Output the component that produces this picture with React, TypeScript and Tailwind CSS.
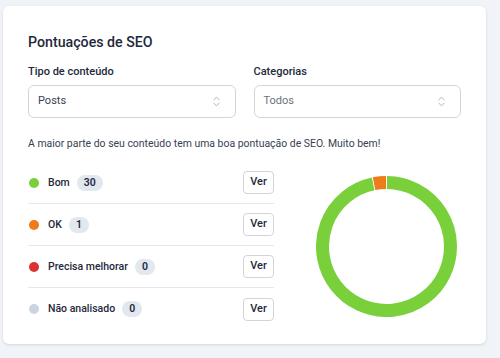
import React from "react";
import { ChevronsUpDown } from "lucide-react";

const rows = [
  { label: "Bom", count: 30, color: "bg-[#7ad03a]" },
  { label: "OK", count: 1, color: "bg-[#ee7c1b]" },
  { label: "Precisa melhorar", count: 0, color: "bg-[#dc3232]" },
  { label: "Não analisado", count: 0, color: "bg-[#cbd5e1]" },
];

function arcPath(cx: number, cy: number, r: number, a0: number, a1: number) {
  const rad = (a: number) => ((a - 90) * Math.PI) / 180;
  const x0 = cx + r * Math.cos(rad(a0));
  const y0 = cy + r * Math.sin(rad(a0));
  const x1 = cx + r * Math.cos(rad(a1));
  const y1 = cy + r * Math.sin(rad(a1));
  const large = a1 - a0 > 180 ? 1 : 0;
  return `M ${x0} ${y0} A ${r} ${r} 0 ${large} 1 ${x1} ${y1}`;
}

function Donut() {
  const cx = 70.5;
  const cy = 70.5;
  const r = 64;
  const split = (30 / 31) * 360;
  return (
    <svg width="141" height="141" viewBox="0 0 141 141">
      <path d={arcPath(cx, cy, r, 0.4, split - 0.4)} stroke="#7ad03a" strokeWidth="13" fill="none" />
      <path d={arcPath(cx, cy, r, split + 0.4, 359.6)} stroke="#ee7c1b" strokeWidth="13" fill="none" />
    </svg>
  );
}

function Select({ value, muted }: { value: string; muted?: boolean }) {
  return (
    <div className="flex h-[33px] items-center justify-between rounded-[6px] border border-[#d1d5db] bg-white pl-[9px] pr-[12px]">
      <span className={"text-[11px] " + (muted ? "text-[#6b7280]" : "text-[#374151]")}>{value}</span>
      <ChevronsUpDown size={13} strokeWidth={1.5} className="text-[#9ca3af]" />
    </div>
  );
}

export default function App() {
  return (
    <div className="min-h-[358px] w-[500px] bg-[#f0f3f8] pl-[3px] pt-[6px] font-['Roboto',sans-serif] text-[#1e293b]">
      <div className="h-[338px] w-[483px] rounded-[6px] bg-white px-[25px] pt-[26px] shadow-[0_1px_3px_rgba(0,0,0,0.12)]">
        <h2 className="text-[14.2px] font-medium leading-[20px] text-[#1e293b]">Pontuações de SEO</h2>
        <div className="mt-[11px] grid grid-cols-2 gap-[18px]">
          <div>
            <div className="mb-[4px] text-[11px] font-medium leading-[18px] text-[#1e293b]">Tipo de conteúdo</div>
            <Select value="Posts" />
          </div>
          <div>
            <div className="mb-[4px] text-[11px] font-medium leading-[18px] text-[#1e293b]">Categorias</div>
            <Select value="Todos" muted />
          </div>
        </div>
        <p className="mt-[16px] text-[10.45px] leading-[20px] text-[#374151]">
          A maior parte do seu conteúdo tem uma boa pontuação de SEO. Muito bem!
        </p>
        <div className="mt-[8px] flex items-center">
          <div className="w-[246px]">
            {rows.map((row, i) => (
              <div
                key={row.label}
                className={
                  "flex h-[42px] items-center " + (i < rows.length - 1 ? "border-b border-[#e5e7eb]" : "")
                }
              >
                <span className={"ml-[1px] h-[10px] w-[10px] rounded-full " + row.color} />
                <span className="ml-[9px] text-[10.5px] font-medium text-[#1e293b]">{row.label}</span>
                <span className="ml-[7px] flex h-[16px] items-center rounded-full bg-[#e2e8f0] px-[7px] text-[10.5px] font-semibold text-[#1e293b]">
                  {row.count}
                </span>
                <button className="ml-auto flex h-[23px] w-[31px] items-center justify-center rounded-[4px] border border-[#d1d5db] bg-white text-[11px] font-medium text-[#1e293b]">
                  Ver
                </button>
              </div>
            ))}
          </div>
          <div className="ml-[42px]">
            <Donut />
          </div>
        </div>
      </div>
    </div>
  );
}
